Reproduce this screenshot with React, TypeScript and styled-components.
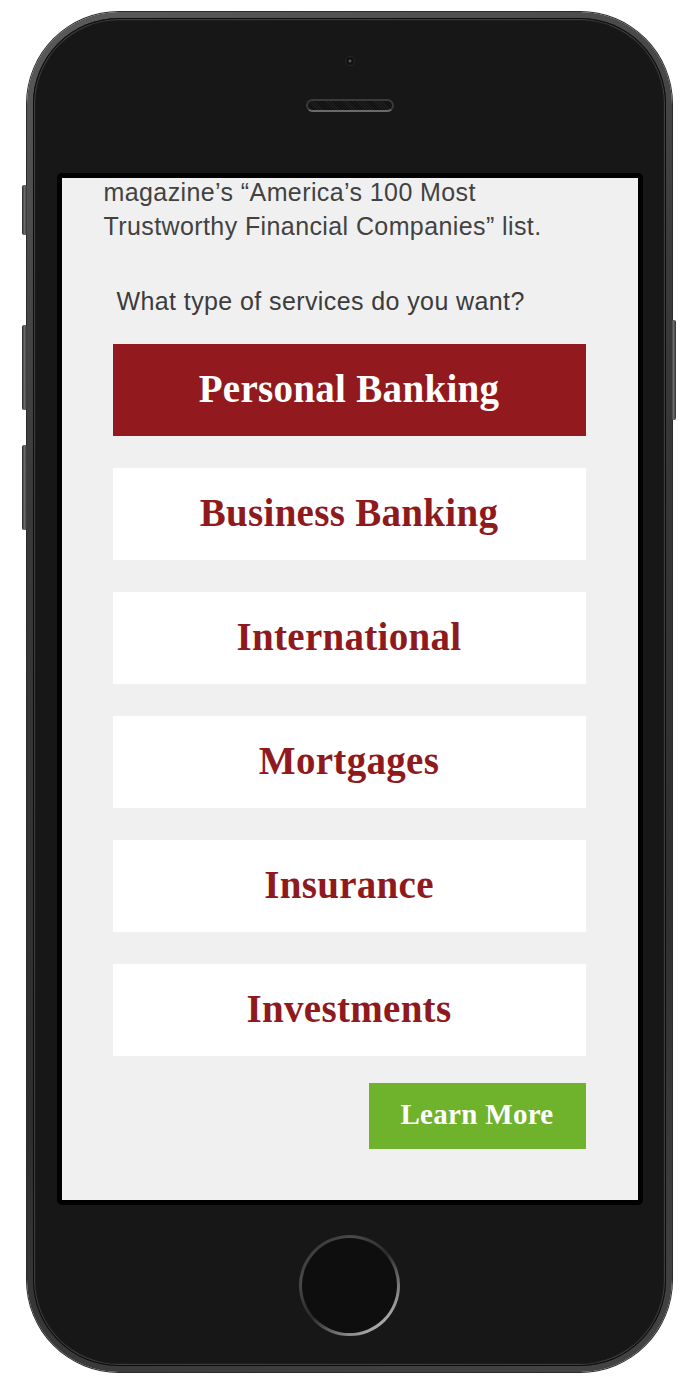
import React from "react";
import styled, { createGlobalStyle } from "styled-components";

const GlobalStyle = createGlobalStyle`
  html, body {
    margin: 0;
    padding: 0;
    background: #ffffff;
  }
  body {
    font-family: "Liberation Sans", Arial, sans-serif;
  }
`;

const Page = styled.div`
  width: 698px;
  height: 1386px;
  padding: 12px 0 0 27px;
  box-sizing: border-box;
  overflow: hidden;
`;

const Shell = styled.div`
  position: relative;
  width: 645px;
  height: 1360px;
  padding: 6px;
  box-sizing: border-box;
  border-radius: 92px;
  background: linear-gradient(160deg, #5a5a5a 0%, #3a3a3a 30%, #2e2e2e 70%, #444 100%);
  box-shadow: 0 0 0 1px #2a2a2a;
`;

const SideKey = styled.div<{ $side: "left" | "right"; $top: number; $h: number }>`
  position: absolute;
  top: ${(p) => p.$top}px;
  ${(p) => (p.$side === "left" ? "left: -5px;" : "right: -4px;")}
  width: 5px;
  height: ${(p) => p.$h}px;
  border-radius: 2px;
  background: linear-gradient(90deg, #2a2a2a, #6a6a6a 50%, #333);
`;

const Body = styled.div`
  width: 100%;
  height: 100%;
  border-radius: 86px;
  background: #171717;
  box-shadow: inset 0 0 0 1px #0b0b0b, inset 0 0 0 2px #3e3e3e, inset 0 0 0 3px #1c1c1c;
  display: flex;
  flex-direction: column;
  align-items: center;
`;

const TopBar = styled.div`
  height: 155px;
  padding-top: 39px;
  box-sizing: border-box;
  display: flex;
  flex-direction: column;
  align-items: center;
  gap: 34px;
`;

const Camera = styled.div`
  width: 8px;
  height: 8px;
  border-radius: 50%;
  background: radial-gradient(circle at 50% 50%, #555 0 1px, #0c0c0c 2px, #222 100%);
  box-shadow: 0 0 0 1px #262626;
`;

const Speaker = styled.div`
  width: 88px;
  height: 13px;
  box-sizing: border-box;
  border-radius: 7px;
  border: 2px solid #3a3a3a;
  border-bottom-color: #6a6a6a;
  background: repeating-linear-gradient(45deg, #101010 0 1px, #1e1e1e 1px 2px);
`;

const Frame = styled.div`
  width: 586px;
  height: 1032px;
  box-sizing: border-box;
  border: 5px solid #000;
  border-radius: 5px;
  background: #000;
`;

const Screen = styled.div`
  width: 100%;
  height: 100%;
  background: #f0f0f0;
  overflow: hidden;
  padding: 0 52px 0 42px;
  box-sizing: border-box;
  display: flex;
  flex-direction: column;
`;

const Intro = styled.p`
  margin: 0;
  display: flex;
  flex-direction: column;
  gap: 2px;
  font-family: "Liberation Sans", Arial, sans-serif;
  font-size: 25px;
  letter-spacing: 0.4px;
  color: #424242;
`;

const IntroLine = styled.span<{ $lh: number }>`
  display: block;
  line-height: ${(p) => p.$lh}px;
`;

const Question = styled.p`
  margin: 37px 0 0 13px;
  font-family: "Liberation Sans", Arial, sans-serif;
  font-size: 25px;
  letter-spacing: 0.4px;
  line-height: 38px;
  color: #3c3c3c;
`;

const Options = styled.div`
  margin: 24px 0 0 9px;
  display: flex;
  flex-direction: column;
  gap: 32px;
`;

const Option = styled.div<{ $active?: boolean }>`
  height: 92px;
  padding-bottom: 4px;
  box-sizing: border-box;
  display: flex;
  align-items: center;
  justify-content: center;
  background: ${(p) => (p.$active ? "#921a1f" : "#ffffff")};
  color: ${(p) => (p.$active ? "#ffffff" : "#8f1a1e")};
  font-family: "Liberation Serif", "Times New Roman", serif;
  font-weight: 700;
  font-size: 39px;
  letter-spacing: 0.3px;
`;

const Actions = styled.div`
  margin-top: 27px;
  display: flex;
  justify-content: flex-end;
`;

const LearnMore = styled.div`
  width: 217px;
  height: 66px;
  padding-bottom: 3px;
  box-sizing: border-box;
  display: flex;
  align-items: center;
  justify-content: center;
  background: #6fb22c;
  color: #ffffff;
  font-family: "Liberation Serif", "Times New Roman", serif;
  font-weight: 700;
  font-size: 29px;
  letter-spacing: 0.3px;
`;

const BottomBar = styled.div`
  padding-top: 30px;
  display: flex;
  justify-content: center;
`;

const HomeButton = styled.div`
  width: 101px;
  height: 101px;
  padding: 3px;
  box-sizing: border-box;
  border-radius: 50%;
  background: linear-gradient(140deg, #2a2a2a 0%, #4a4a4a 25%, #2a2a2a 50%, #a8a8a8 85%, #4a4a4a 100%);
`;

const HomeFace = styled.div`
  width: 100%;
  height: 100%;
  border-radius: 50%;
  background: #0e0e0e;
`;

const options = [
  "Personal Banking",
  "Business Banking",
  "International",
  "Mortgages",
  "Insurance",
  "Investments",
];

export default function App() {
  return (
    <>
      <GlobalStyle />
      <Page>
        <Shell>
          <SideKey $side="left" $top={173} $h={50} />
          <SideKey $side="left" $top={313} $h={85} />
          <SideKey $side="left" $top={433} $h={85} />
          <SideKey $side="right" $top={308} $h={100} />
          <Body>
            <TopBar>
              <Camera />
              <Speaker />
            </TopBar>
            <Frame>
              <Screen>
                <Intro>
                  <IntroLine $lh={28}>magazine’s “America’s 100 Most</IntroLine>
                  <IntroLine $lh={37}>Trustworthy Financial Companies” list.</IntroLine>
                </Intro>
                <Question>What type of services do you want?</Question>
                <Options>
                  {options.map((o, i) => (
                    <Option key={o} $active={i === 0}>
                      {o}
                    </Option>
                  ))}
                </Options>
                <Actions>
                  <LearnMore>Learn More</LearnMore>
                </Actions>
              </Screen>
            </Frame>
            <BottomBar>
              <HomeButton>
                <HomeFace />
              </HomeButton>
            </BottomBar>
          </Body>
        </Shell>
      </Page>
    </>
  );
}
